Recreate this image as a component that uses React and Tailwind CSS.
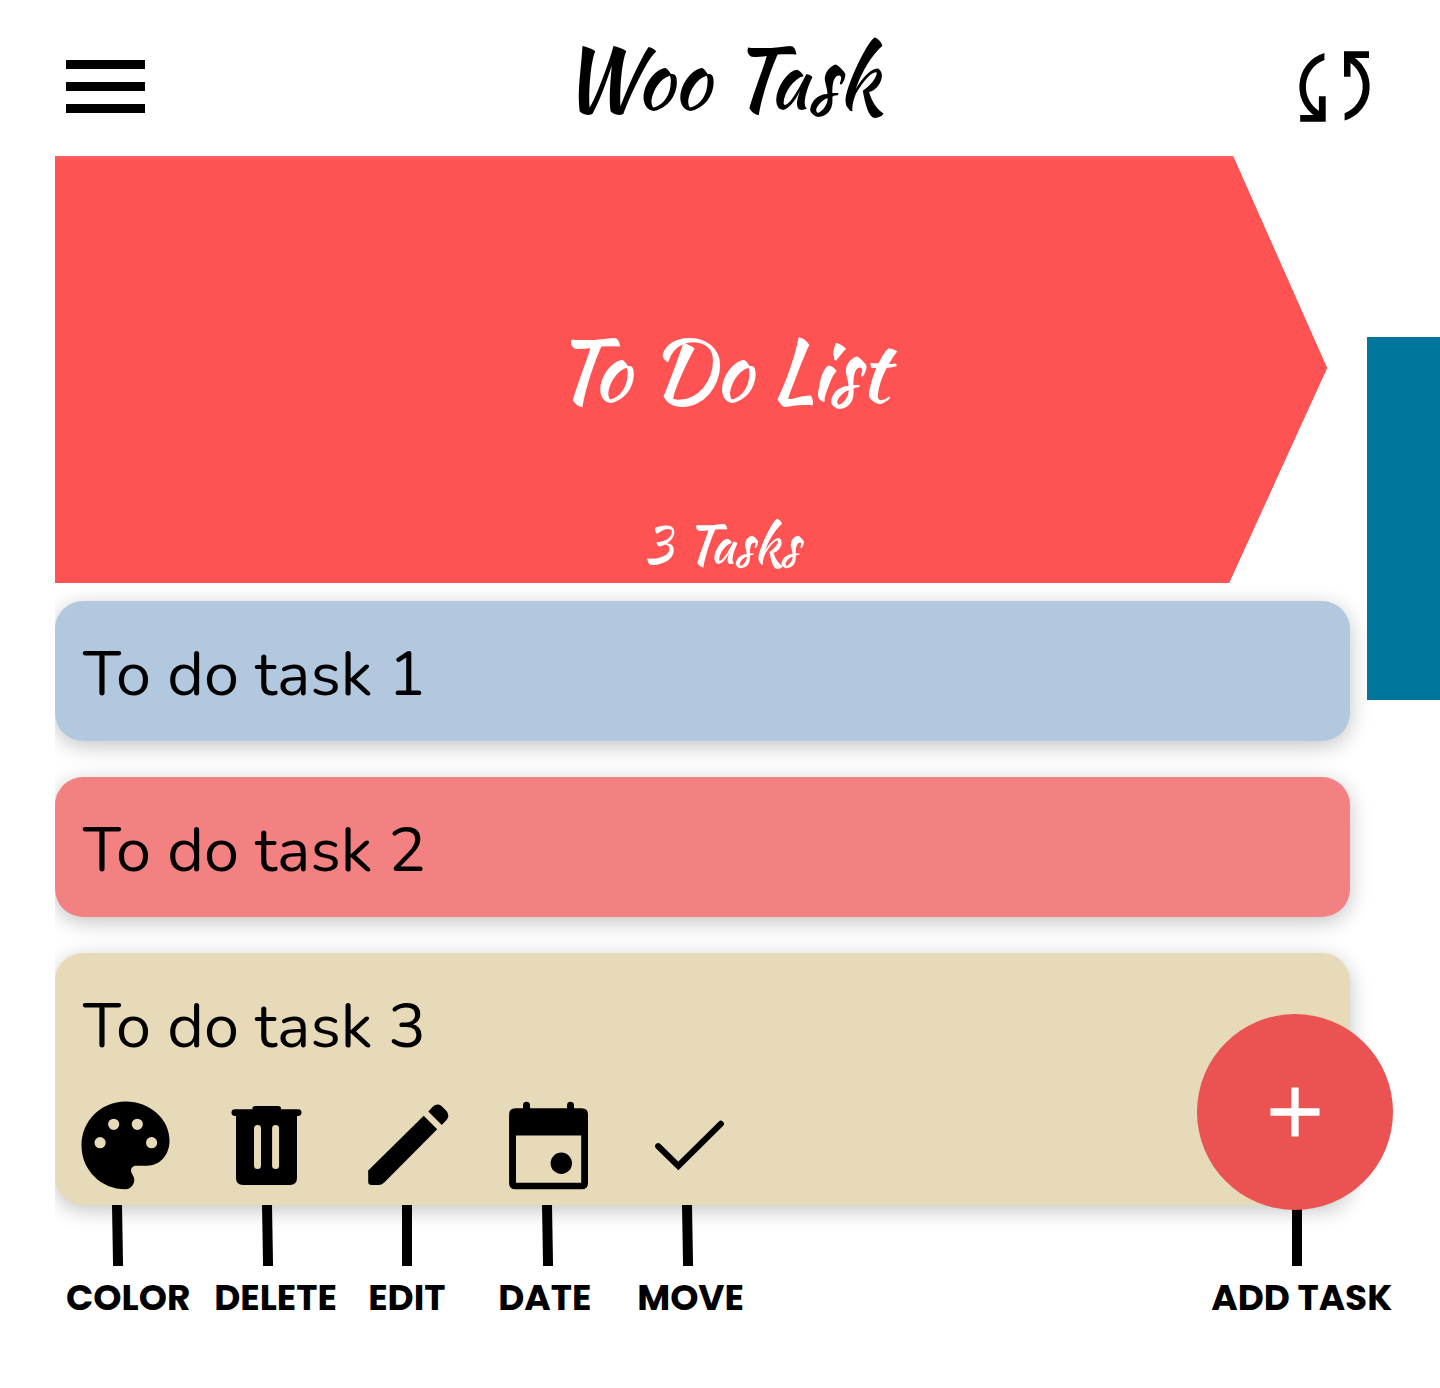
const scriptFont = "font-['Kaushan_Script','Lato',cursive] font-normal whitespace-nowrap";

function MenuIcon() {
  return (
    <button aria-label="Menu" className="mt-[60px] flex h-[53px] w-[79px] flex-col justify-between">
      <span className="block h-[9px] w-full bg-black" />
      <span className="block h-[9px] w-full bg-black" />
      <span className="block h-[9px] w-full bg-black" />
    </button>
  );
}

function SyncIcon() {
  return (
    <svg className="ml-auto mt-[50px] h-[74px] w-[74px]" viewBox="1298 50 74 74">
      <path d="M1324.4 53.1A35.2 35.2 0 0 0 1321 119.3V112A28.6 28.6 0 0 1 1324.4 60Z" />
      <path d="M1300.2 115H1318.9V96.2H1325.7V121.7H1300.2Z" />
      <path d="M1344.6 120.5A35.2 35.2 0 0 0 1348 54.3V61.6A28.6 28.6 0 0 1 1344.6 113.2Z" />
      <path d="M1369 58H1350.5V76.8H1344V51.3H1369Z" />
    </svg>
  );
}

function PaletteIcon() {
  return (
    <svg className="h-[90px] w-[90px]" viewBox="80 1101 90 90">
      <path
        fillRule="evenodd"
        d="M125.5 1101.5C101 1101.5 81.5 1121 81.5 1145.5S101 1189.3 125.5 1189.3C130.5 1189.3 134.3 1184.5 134.3 1180C134.3 1176 131 1173.5 131 1170.5C131 1167.5 133.5 1165.7 136.5 1165.7H147C159.5 1165.7 169.5 1155.5 169.5 1140.5C169.5 1119 150 1101.5 125.5 1101.5ZM94.5 1142.7a5.6 5.6 0 1 0 11.2 0a5.6 5.6 0 1 0 -11.2 0ZM108.1 1124.3a5.6 5.6 0 1 0 11.2 0a5.6 5.6 0 1 0 -11.2 0ZM131.7 1124.3a5.6 5.6 0 1 0 11.2 0a5.6 5.6 0 1 0 -11.2 0ZM146 1142.7a5.6 5.6 0 1 0 11.2 0a5.6 5.6 0 1 0 -11.2 0Z"
      />
    </svg>
  );
}

function TrashIcon() {
  return (
    <svg className="h-[90px] w-[74px]" viewBox="230 1101 74 90">
      <rect x="231.5" y="1109.2" width="70" height="6.8" rx="3.4" />
      <path d="M252.3 1110.5V1109Q252.3 1106 255.3 1106H278.1Q281.1 1106 281.1 1109V1110.5z" />
      <path
        fillRule="evenodd"
        d="M236 1112H297V1178Q297 1185 290 1185H243Q236 1185 236 1178ZM254 1128.5V1165.5a3.5 3.5 0 0 0 7 0V1128.5a3.5 3.5 0 0 0 -7 0ZM272.1 1128.5V1165.5a3.5 3.5 0 0 0 7 0V1128.5a3.5 3.5 0 0 0 -7 0Z"
      />
    </svg>
  );
}

function PencilIcon() {
  return (
    <svg className="h-[90px] w-[84px]" viewBox="366 1101 84 90">
      <path d="M423.7 1115.8L437.2 1129.3L384 1182.8Q381.7 1185 378.5 1185H371.5Q368.2 1185 368.2 1181.7V1170.5Z" />
      <path d="M428.3 1111.4L433 1106.6Q437 1102.8 441.5 1106L446.5 1111Q450 1115.5 446.5 1120L441.8 1124.9Z" />
    </svg>
  );
}

function CalendarIcon() {
  return (
    <svg className="h-[90px] w-[82px]" viewBox="508 1101 82 90">
      <rect x="523" y="1101.8" width="7" height="12" rx="3.5" />
      <rect x="567" y="1101.8" width="7" height="12" rx="3.5" />
      <path
        fillRule="evenodd"
        d="M515.5 1108.2H581.6Q588 1108.2 588 1114.6V1183Q588 1189.3 581.6 1189.3H515.5Q509.1 1189.3 509.1 1183V1114.6Q509.1 1108.2 515.5 1108.2ZM516 1135.5V1182.8H581.2V1135.5Z"
      />
      <circle cx="561.3" cy="1163.3" r="10.7" />
    </svg>
  );
}

function CheckIcon() {
  return (
    <svg className="h-[90px] w-[74px]" viewBox="652 1101 74 90" fill="none" stroke="#000" strokeWidth="6.2" strokeLinecap="round">
      <path d="M658.2 1146.2L678.3 1165.9L720.8 1123.9" />
    </svg>
  );
}

function Task({ title, tone, children }) {
  return (
    <li className={`rounded-[28px] shadow-[0_5px_21px_rgba(0,0,0,0.24)] ${tone}`}>
      <p className="h-[140px] pl-[28px] font-['Nunito','Lato',sans-serif] text-[62.9px] leading-[146px]">{title}</p>
      {children}
    </li>
  );
}

function Stem({ className }) {
  return <span className={`block h-[61px] w-[10px] origin-top bg-black ${className}`} />;
}

function Label({ children, className }) {
  return <span className={`block whitespace-nowrap ${className}`}>{children}</span>;
}

export default function App() {
  return (
    <div className="relative h-[1388px] w-[1440px] overflow-hidden bg-white text-black">
      <header className="flex h-[156px] items-start pl-[66px] pr-[68px]">
        <MenuIcon />
        <h1 className={`ml-[415.5px] mt-[21px] text-[83.5px] leading-[114px] ${scriptFont}`}>Woo Task</h1>
        <SyncIcon />
      </header>

      <main className="flex items-start">
        <div className="w-[1367px] shrink-0 pl-[55px] [clip-path:inset(0_-40px_0_55px)]">
          <section className={`flex h-[427px] w-[1272px] flex-col bg-[#ff5353] bg-[linear-gradient(#ff6060,#ff5353_5px)] text-white [clip-path:polygon(0_0,1178px_0,1272px_212px,1174px_100%,0_100%)] ${scriptFont}`}>
            <h2 className="ml-[498px] mt-[157px] h-[114px] text-[83.8px] leading-[114px]">To Do List</h2>
            <p className="ml-[587.7px] mt-[81px] text-[53px] leading-[72px]">3 Tasks</p>
          </section>

          <ul className="mt-[18px] flex w-[1295px] flex-col gap-[36px]">
            <Task title="To do task 1" tone="bg-[#b2c8df]" />
            <Task title="To do task 2" tone="bg-[#f38181]" />
            <Task title="To do task 3" tone="bg-[#e7dab8]">
              <div className="flex h-[112px] pl-[25px] pt-[8px]">
                <PaletteIcon />
                <span className="ml-[60px]"><TrashIcon /></span>
                <span className="ml-[62px]"><PencilIcon /></span>
                <span className="ml-[58px]"><CalendarIcon /></span>
                <span className="ml-[62px]"><CheckIcon /></span>
              </div>
            </Task>
          </ul>

          <div className="relative flex pl-[57px]">
            <Stem className="skew-x-1" />
            <Stem className="ml-[140px] skew-x-1" />
            <Stem className="ml-[130px]" />
            <Stem className="ml-[130px] skew-x-1" />
            <Stem className="ml-[130px] skew-x-1" />
            <Stem className="ml-[600px]" />
          </div>
        </div>
        <aside className="relative z-10 mt-[181px] h-[363px] w-[73px] shrink-0 bg-[#00769c]" />
      </main>

      <div className="flex pl-[66px] pt-[9px] font-['Poppins','Lato',sans-serif] text-[35.9px] font-bold leading-[45px]">
        <Label className="w-[148.2px]">COLOR</Label>
        <Label className="w-[154px]">DELETE</Label>
        <Label className="w-[130px]">EDIT</Label>
        <Label className="w-[139px]">DATE</Label>
        <Label className="w-[574px]">MOVE</Label>
        <Label className="w-[190px]">ADD TASK</Label>
      </div>

      <button aria-label="Add task" className="absolute left-[1197px] top-[1014px] flex h-[196px] w-[196px] items-center justify-center rounded-full bg-[#eb5353]">
        <svg className="h-[50px] w-[50px]" viewBox="0 0 50 50" stroke="#fff" strokeWidth="7.3">
          <path d="M25 .5V49.5M.5 25H49.5" />
        </svg>
      </button>
    </div>
  );
}
